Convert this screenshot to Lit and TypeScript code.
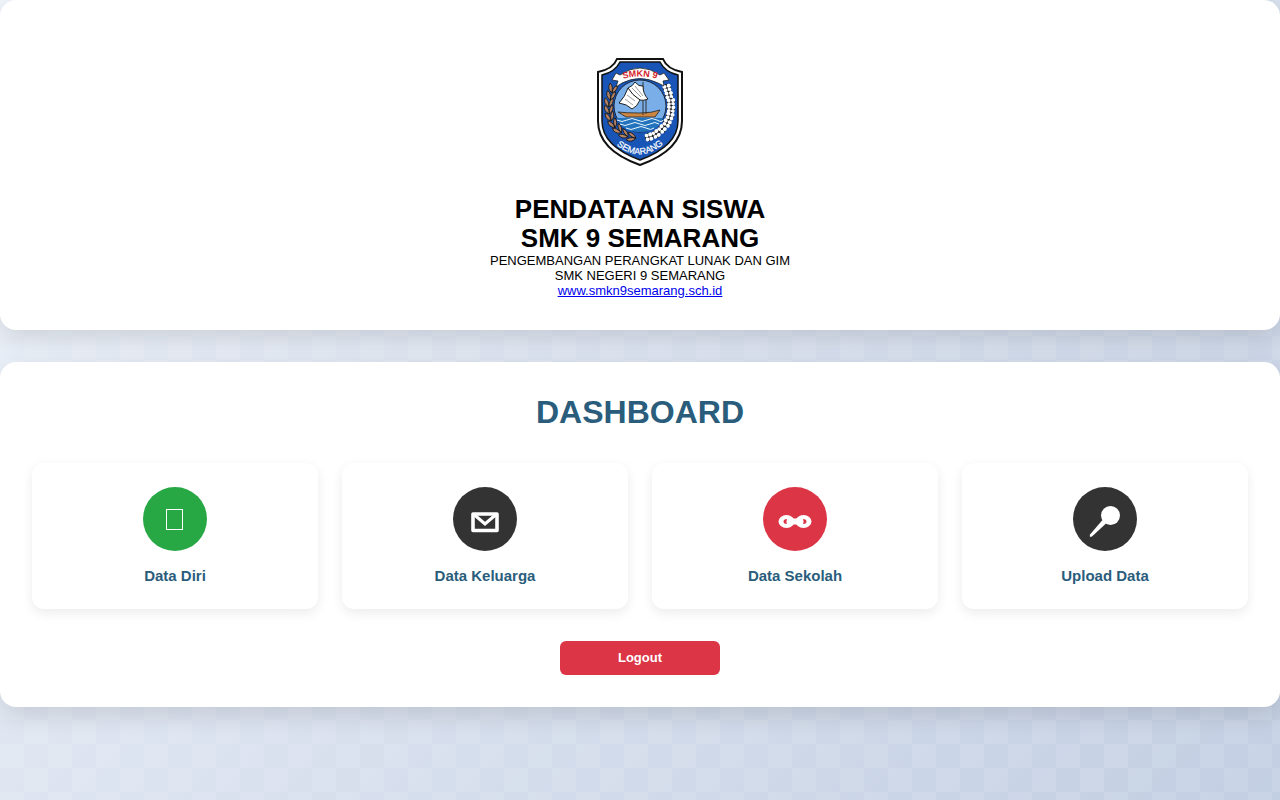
import { LitElement, html, svg, css } from "lit";
import { customElement } from "lit/decorators.js";

const grains = [
  [17, 31, 15], [15, 38, 8], [13, 45, 2], [13, 52, -5], [14, 59, -15], [17, 66, -25], [22, 72, -40], [28, 77, -55], [35, 80, -75],
];

@customElement("school-crest")
class SchoolCrest extends LitElement {
  static styles = css`
    :host { display: block; }
    svg { display: block; width: 88px; height: 110px; }
    text { font-family: "Liberation Sans", Arial, sans-serif; }
    .motto { font-size: 9px; font-weight: 700; fill: #d51f2c; }
    .city { font-size: 9px; fill: #fff; stroke: #fff; stroke-width: 0.2px; }
  `;
  render() {
    return html`<svg viewBox="0 0 88 110" role="img" aria-label="SMKN 9 Semarang">
      <defs>
        <path id="top" d="M20 24Q44 15 68 24" />
        <path id="bottom" d="M17 85Q44 110 71 84" />
      </defs>
      <path d="M21 2H67Q71 12 86 15V64Q86 93 44 108Q2 93 2 64V15Q17 12 21 2Z" fill="#fff" stroke="#111" stroke-width="2" />
      <path d="M24 5H64Q69 15 82 18V64Q82 89 44 103Q6 89 6 64V18Q19 15 24 5Z" fill="#1855b7" stroke="#111" stroke-width="1.5" />
      <circle cx="44" cy="49" r="26" fill="#79aee8" stroke="#111" stroke-width=".8" />
      <path d="M21 61H67Q62 75 44 75Q26 75 21 61Z" fill="#2373bd" />
      <path d="M21 63q5 3 10 0t10 0t10 0t10 0t6 0M24 67q5 3 10 0t10 0t10 0t9 0M30 71q5 3 10 0t10 0t8 0" fill="none" stroke="#eaf7ff" stroke-width="1" />
      <path d="M22 55Q30 56 44 56Q56 56 64 53L59 60H30Z" fill="#cd8642" stroke="#222" stroke-width=".8" />
      <path d="M47 25V58M50 40V57" stroke="#333" stroke-width="1" />
      <path d="M32 31Q37 29 39 25Q43 30 47 29Q47 37 52 42Q47 44 44 43Q41 50 36 52Q31 47 23 46Q29 40 32 31Z" fill="#fff" stroke="#111" stroke-width=".9" />
      <path d="M32 31Q36 38 44 43" fill="none" stroke="#111" stroke-width="1" />
      <path d="M36 31L45 40M39 29L47 39M31 38L39 44M29 42L37 48" fill="none" stroke="#555" stroke-width=".6" />
      ${grains.map(([x, y, a]) => svg`
        <g transform="translate(${x} ${y}) rotate(${a})">
          <path d="M0 5Q-6 2-4-4Q0-2 0 5ZM0 5Q5 2 4-4Q0-2 0 5Z" fill="#b58263" stroke="#171717" stroke-width=".8" />
        </g>
        <g transform="translate(${88 - x} ${y}) rotate(${-a})">
          <circle r="4.2" fill="#171717" />
          <circle cx="-2.2" cy="-1.8" r="2" fill="#fff" />
          <circle cx="2.2" cy="-1.8" r="2" fill="#fff" />
          <circle cx="-2" cy="2" r="1.9" fill="#fff" />
          <circle cx="2" cy="2" r="1.9" fill="#fff" />
        </g>`)}
      <path d="M22 24L16 23L20 16L24 18Q44 4 64 18L68 16L73 23L67 24L68 29L62 26Q44 17 26 26L20 30Z" fill="#fff" stroke="#111" stroke-width=".7" />
      <text class="motto" text-anchor="middle"><textPath href="#top" startOffset="50%">SMKN 9</textPath></text>
      <text class="city" text-anchor="middle"><textPath href="#bottom" startOffset="50%">SEMARANG</textPath></text>
    </svg>`;
  }
}

const items = [
  { label: "Data Diri", tone: "green", icon: svg`<rect x="23.5" y="22.5" width="16" height="20" fill="none" stroke="#fff" stroke-width="1" />` },
  { label: "Data Keluarga", tone: "dark", icon: svg`<path d="M20 27H44V43.5H20Z" fill="none" stroke="#fff" stroke-width="3.6" stroke-linejoin="round" /><path d="M21 27.5L32 37L43 27.5" fill="none" stroke="#fff" stroke-width="3.2" />` },
  { label: "Data Sekolah", tone: "red", icon: svg`<ellipse cx="23.5" cy="34.5" rx="8" ry="6.5" fill="#fff" /><ellipse cx="40.5" cy="34.5" rx="8" ry="6.5" fill="#fff" /><rect x="27" y="31.5" width="10" height="6" fill="#fff" /><path d="M20.5 34.5Q20.5 32 24 32Q23 34.5 24 37Q20.5 37 20.5 34.5ZM43.5 34.5Q43.5 32 40 32Q41 34.5 40 37Q43.5 37 43.5 34.5Z" fill="#dc3545" />` },
  { label: "Upload Data", tone: "dark", icon: svg`<circle cx="37.5" cy="28.5" r="9.5" fill="#fff" /><path d="M29.5 33L33 36.5L19.5 49Q16 51.5 17 47.5Z" fill="#fff" />` },
];

@customElement("app-root")
class AppRoot extends LitElement {
  static styles = css`
    :host {
      display: block;
      min-height: 100vh;
      background:
        repeating-conic-gradient(rgba(255, 255, 255, 0.1) 0 25%, transparent 0 50%) 0 0 / 48px 48px,
        linear-gradient(135deg, #f0f4fb, #c2cee2);
      font-family: "Liberation Sans", Arial, sans-serif;
      color: #000;
    }
    * { box-sizing: border-box; }
    .page { display: flex; flex-direction: column; gap: 32px; }
    .panel { background: #fff; border-radius: 16px; box-shadow: 0 8px 24px rgba(0, 0, 0, 0.12); padding: 32px; }
    .intro { display: flex; flex-direction: column; align-items: center; text-align: center; padding-top: 57px; }
    .title { margin: 28px 0 0; font-size: 26px; line-height: 29px; font-weight: 700; }
    .sub { margin: 0; font-size: 13px; line-height: 15px; }
    .sub a { color: #0000ee; }
    .heading { margin: 0; color: #2a5d7c; font-size: 32px; line-height: 37px; text-align: center; }
    .cards { display: grid; grid-template-columns: repeat(auto-fit, minmax(220px, 1fr)); gap: 24px; margin: 32px 0; }
    .card { display: flex; flex-direction: column; align-items: center; gap: 16px; padding: 24px; background: #fff; border-radius: 12px; box-shadow: 0 4px 12px rgba(0, 0, 0, 0.08); color: #2a5d7c; text-decoration: none; font-size: 15px; line-height: 18px; font-weight: 700; }
    .icon { width: 64px; height: 64px; border-radius: 50%; }
    .green { background: #28a745; }
    .dark { background: #333; }
    .red { background: #dc3545; }
    .logout { display: block; width: 160px; margin: 0 auto; padding: 8px; border: 0; border-radius: 6px; background: #dc3545; color: #fff; font-family: inherit; font-size: 13px; line-height: 18px; font-weight: 700; cursor: pointer; }
  `;
  render() {
    return html`<main class="page">
      <header class="panel intro">
        <school-crest></school-crest>
        <h1 class="title">PENDATAAN SISWA<br />SMK 9 SEMARANG</h1>
        <p class="sub">PENGEMBANGAN PERANGKAT LUNAK DAN GIM<br />SMK NEGERI 9 SEMARANG<br /><a href="#">www.smkn9semarang.sch.id</a></p>
      </header>
      <section class="panel">
        <h2 class="heading">DASHBOARD</h2>
        <nav class="cards">
          ${items.map((i) => html`<a class="card" href="#">
            <svg class="icon ${i.tone}" viewBox="0 0 64 64" aria-hidden="true">${i.icon}</svg>
            <span>${i.label}</span>
          </a>`)}
        </nav>
        <button class="logout" type="button">Logout</button>
      </section>
    </main>`;
  }
}
